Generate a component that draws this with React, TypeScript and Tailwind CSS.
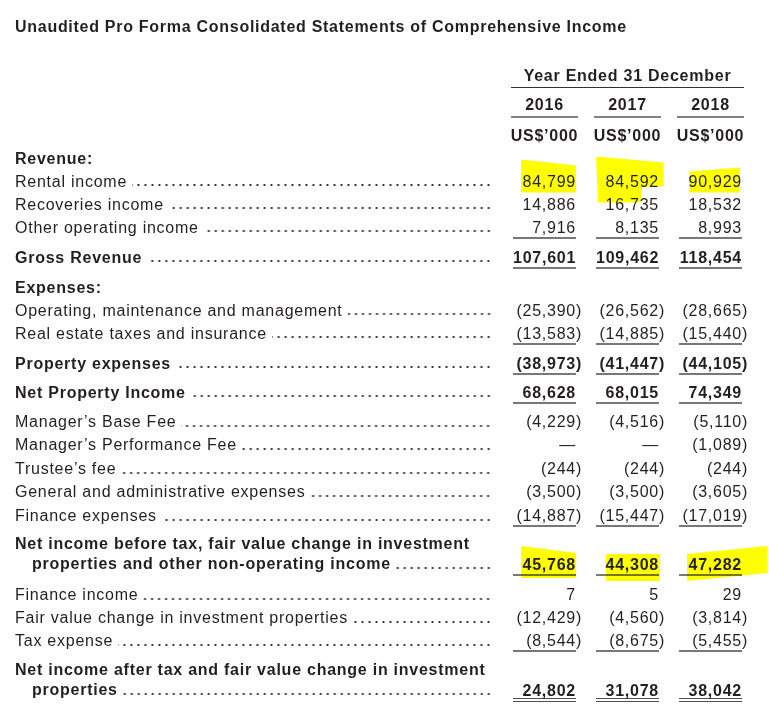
import type { ReactNode } from "react";

type Line = "single" | "double" | undefined;

const ink = "text-[#231f20]";
const cols = "grid grid-cols-[minmax(0,1fr)_63px_63px_63px] gap-x-[20px]";

function Num({ v }: { v: string }) {
  if (v.startsWith("(")) {
    return (
      <>
        {v.slice(0, -1)}
        <span className="inline-block w-0">)</span>
      </>
    );
  }
  return <>{v}</>;
}

// dot leader, anchored on the right edge so the dots line up down the page
function Dots({ tall = true }: { tall?: boolean }) {
  return (
    <span
      className={`ml-[5px] min-w-0 flex-1 bg-[radial-gradient(circle,#2f2b2c_0.95px,transparent_1.25px)] bg-[length:7px_4px] bg-repeat-x ${
        tall ? "[background-position:right_1px_bottom_5.5px]" : "[background-position:right_1px_bottom_4px]"
      }`}
    />
  );
}

const lineCls: Record<string, string> = {
  single: "shadow-[inset_0_-2px_0_#77787b]",
  double: "shadow-[inset_0_-1px_0_#4d4d4f,inset_0_-3px_0_#fff,inset_0_-4px_0_#4d4d4f]",
};

type Mark = { cls: string };

function Cell({ v, bold, line, mark }: { v: string; bold?: boolean; line?: Line; mark?: Mark }) {
  return (
    <div
      className={`relative self-end text-right leading-[23px] ${bold ? "font-bold" : ""} ${
        line ? lineCls[line] : ""
      }`}
    >
      {mark && <span className={`absolute bg-[#ffff00] mix-blend-multiply ${mark.cls}`} />}
      <span className="relative">
        <Num v={v} />
      </span>
    </div>
  );
}

function Row({
  label,
  sub,
  values,
  bold,
  line,
  dots = true,
  gap,
  h = "leading-[23px]",
  marks,
}: {
  label: ReactNode;
  sub?: string;
  values?: string[];
  bold?: boolean;
  line?: Line;
  dots?: boolean;
  gap?: string;
  h?: string;
  marks?: (Mark | undefined)[];
}) {
  return (
    <div className={`${cols} ${gap ?? ""}`}>
      {sub ? (
        <div className="min-w-0 font-bold leading-[20px] pb-[2px]">
          <div className="whitespace-nowrap">{label}</div>
          <div className="flex pl-[17px]">
            <span className="whitespace-nowrap">{sub}</span>
            <Dots tall={false} />
          </div>
        </div>
      ) : (
        <div className={`flex min-w-0 ${h} ${bold ? "font-bold" : ""}`}>
          <span className="whitespace-nowrap">{label}</span>
          {dots && <Dots />}
        </div>
      )}
      {values
        ? values.map((v, i) => <Cell key={i} v={v} bold={bold} line={line} mark={marks?.[i]} />)
        : null}
    </div>
  );
}

export default function App() {
  return (
    <div
      className={`w-[769px] h-[717px] overflow-hidden bg-white pl-[15px] pr-[27px] pt-[18px] font-['Liberation_Sans',Arial,sans-serif] text-[16px] tracking-[0.75px] ${ink}`}
    >
      <h1 className="font-bold leading-[18px] tracking-[0.72px] whitespace-nowrap">
        Unaudited Pro Forma Consolidated Statements of Comprehensive Income
      </h1>

      <div className={`mt-[29px] ${cols} font-bold`}>
        <div className="col-start-2 col-span-3 -mx-[2px] text-center leading-[22px] border-b border-[#333]">
          Year Ended 31 December
        </div>
        {["2016", "2017", "2018"].map((y, i) => (
          <div
            key={y}
            className={`${i === 0 ? "col-start-2" : ""} -mx-[2px] mt-[6px] pb-[2px] text-center leading-[22px] shadow-[inset_0_-2px_0_#808285]`}
          >
            {y}
          </div>
        ))}
        {["US$’000", "US$’000", "US$’000"].map((u, i) => (
          <div
            key={i}
            className={`${i === 0 ? "col-start-2" : ""} -mx-[4px] mt-[5.5px] text-center leading-[23px] whitespace-nowrap`}
          >
            {u}
          </div>
        ))}
      </div>

      <Row label="Revenue:" bold dots={false} />
      <Row
        label="Rental income"
        values={["84,799", "84,592", "90,929"]}
        marks={[
          { cls: "left-[8px] -top-[10px] w-[55px] h-[33px] [clip-path:polygon(0_0,100%_18%,100%_100%,0_100%)]" },
          {
            cls: "-left-[63px] -top-[13px] w-[130px] h-[46px] [clip-path:polygon(63px_0,130px_6px,130px_30px,108px_31px,108px_46px,65px_46px)]",
          },
          { cls: "left-[10px] -top-[2px] w-[51px] h-[25px] [clip-path:polygon(0_4px,100%_0,100%_100%,0_100%)]" },
        ]}
      />
      <Row label="Recoveries income" values={["14,886", "16,735", "18,532"]} />
      <Row label="Other operating income" values={["7,916", "8,135", "8,993"]} line="single" />
      <Row label="Gross Revenue" values={["107,601", "109,462", "118,454"]} bold line="single" gap="mt-[7px]" />

      <Row label="Expenses:" bold dots={false} gap="mt-[7px]" />
      <Row label="Operating, maintenance and management" values={["(25,390)", "(26,562)", "(28,665)"]} />
      <Row label="Real estate taxes and insurance" values={["(13,583)", "(14,885)", "(15,440)"]} line="single" />
      <Row label="Property expenses" values={["(38,973)", "(41,447)", "(44,105)"]} bold line="single" gap="mt-[7px]" />
      <Row label="Net Property Income" values={["68,628", "68,015", "74,349"]} bold line="single" gap="mt-[6px]" />

      <div className="mt-[6px] [&_.leading-\[23px\]]:leading-[23.5px]">
        <Row label="Manager’s Base Fee" values={["(4,229)", "(4,516)", "(5,110)"]} />
        <Row label="Manager’s Performance Fee" values={["—", "—", "(1,089)"]} />
        <Row label="Trustee’s fee" values={["(244)", "(244)", "(244)"]} />
        <Row label="General and administrative expenses" values={["(3,500)", "(3,500)", "(3,605)"]} />
        <Row label="Finance expenses" values={["(14,887)", "(15,447)", "(17,019)"]} line="single" />
      </div>

      <Row
        label="Net income before tax, fair value change in investment"
        sub="properties and other non-operating income"
        values={["45,768", "44,308", "47,282"]}
        bold
        line="single"
        gap="mt-[7px]"
        marks={[
          { cls: "left-[8px] -top-[7px] w-[55px] h-[32px] [clip-path:polygon(0_0,100%_7px,100%_100%,0_100%)]" },
          { cls: "left-[10px] top-[1px] w-[54px] h-[27px]" },
          { cls: "left-[8px] -top-[7px] w-[80px] h-[35px] [clip-path:polygon(0_8px,100%_0,100%_27px,0_100%)]" },
        ]}
      />

      <Row label="Finance income" values={["7", "5", "29"]} gap="mt-[7px]" />
      <Row label="Fair value change in investment properties" values={["(12,429)", "(4,560)", "(3,814)"]} />
      <Row label="Tax expense" values={["(8,544)", "(8,675)", "(5,455)"]} line="single" />

      <Row
        label="Net income after tax and fair value change in investment"
        sub="properties"
        values={["24,802", "31,078", "38,042"]}
        bold
        line="double"
        gap="mt-[8px]"
      />
    </div>
  );
}
